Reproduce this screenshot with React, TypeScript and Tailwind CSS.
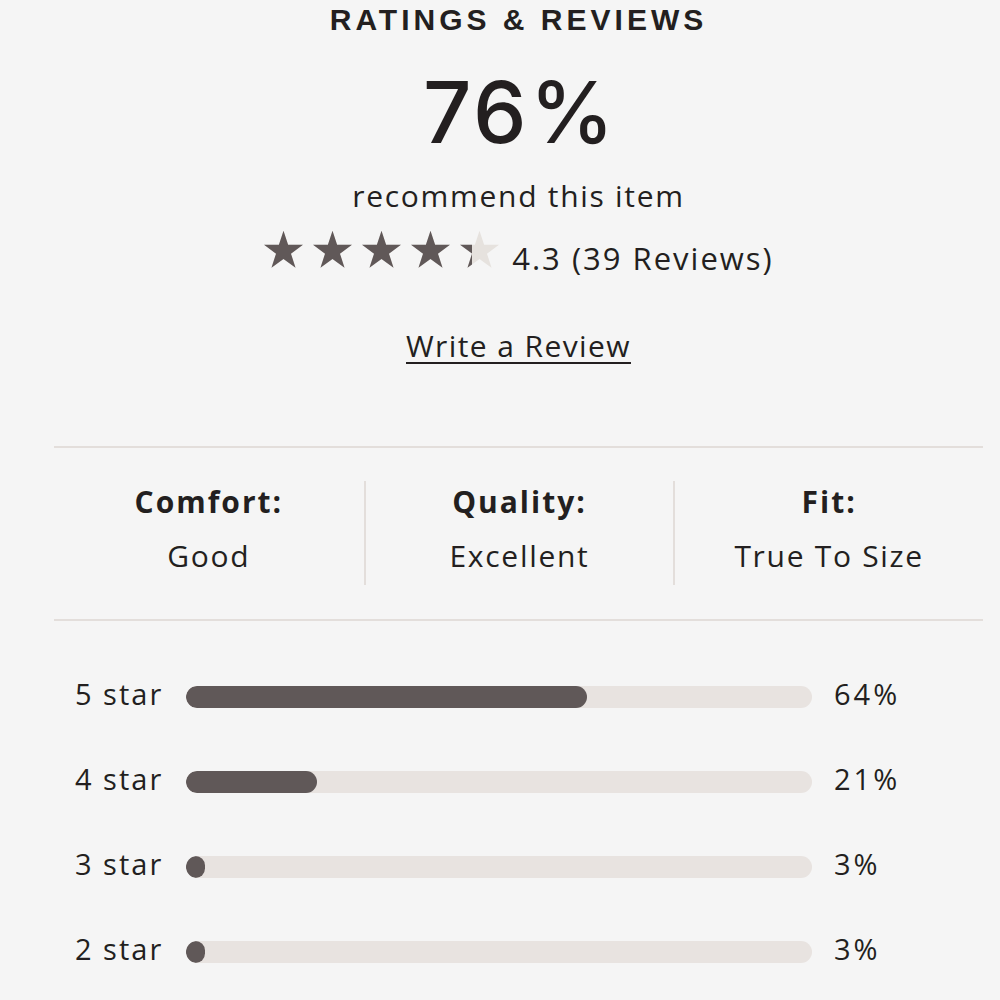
const STAR_POINTS =
  "12,1 14.7,9.29 23.41,9.29 16.37,14.42 19.05,22.71 12,17.59 4.95,22.71 7.63,14.42 0.59,9.29 9.3,9.29";

function Star({ fill }: { fill: number }) {
  return (
    <div className="relative w-[41px] h-[41px]">
      <svg viewBox="0 0 24 24" className="absolute inset-0 w-full h-full">
        <polygon points={STAR_POINTS} fill="#e6e2de" />
      </svg>
      <div className="absolute inset-y-0 left-0 overflow-hidden" style={{ width: `${fill * 100}%` }}>
        <svg viewBox="0 0 24 24" className="w-[41px] h-[41px]">
          <polygon points={STAR_POINTS} fill="#605858" />
        </svg>
      </div>
    </div>
  );
}

const bars = [
  { label: "5 star", pct: 64 },
  { label: "4 star", pct: 21 },
  { label: "3 star", pct: 3 },
  { label: "2 star", pct: 3 },
];

const attrs = [
  { name: "Comfort:", value: "Good" },
  { name: "Quality:", value: "Excellent" },
  { name: "Fit:", value: "True To Size" },
];

export default function App() {
  const rating = 4.3;
  return (
    <main className="min-h-screen bg-[#f5f5f5] text-[#231f20] font-['Open_Sans',sans-serif] overflow-hidden">
      <div className="ml-[54px] w-[929px] flex flex-col items-center">
        <h2 className="mt-[2px] font-['Liberation_Sans',sans-serif] text-[30px] leading-[36px] font-bold tracking-[4px]">
          RATINGS &amp; REVIEWS
        </h2>
        <div className="mt-[31px] font-['Inter',sans-serif] text-[85px] leading-[87px] font-medium tracking-[3px] pl-[3px]">
          76%
        </div>
        <p className="mt-[22px] text-[30px] leading-[36px] tracking-[1.7px]">recommend this item</p>
        <div className="mt-[15px] flex items-end">
          <div className="flex gap-[8px]">
            {[0, 1, 2, 3, 4].map((i) => (
              <Star key={i} fill={Math.max(0, Math.min(1, rating - i))} />
            ))}
          </div>
          <span className="ml-[12px] -mb-[6px] text-[31px] leading-[36px] tracking-[2px]">4.3 (39 Reviews)</span>
        </div>
        <a
          href="#"
          className="mt-[58px] text-[30px] leading-[36px] tracking-[1.4px] underline underline-offset-[5px] decoration-[2px]"
        >
          Write a Review
        </a>

        <div className="mt-[82px] w-full border-y-2 border-[#e3dedb] pt-[33px] pb-[34px] grid grid-cols-3">
          {attrs.map((a, i) => (
            <div
              key={a.name}
              className={`h-[104px] flex flex-col items-center ${i > 0 ? "border-l-2 border-[#e3dedb]" : ""}`}
            >
              <span className="text-[30px] leading-[42px] font-bold tracking-[2px]">{a.name}</span>
              <span className="mt-[12px] text-[30px] leading-[42px] tracking-[1.7px]">{a.value}</span>
            </div>
          ))}
        </div>

        <div className="w-full mt-[58px] flex flex-col gap-[49px] pl-[21px]">
          {bars.map((b) => (
            <div key={b.label} className="h-[36px] flex items-center">
              <span className="w-[111px] mb-[6px] text-[29px] leading-[30px] tracking-[2px]">{b.label}</span>
              <div className="w-[626px] h-[22px] rounded-full bg-[#e8e3e0] overflow-hidden">
                <div className="h-full rounded-full bg-[#605858]" style={{ width: `${Math.max(b.pct, 3)}%` }} />
              </div>
              <span className="ml-[22px] mb-[6px] text-[29px] leading-[30px] tracking-[3px]">{b.pct}%</span>
            </div>
          ))}
        </div>
      </div>
    </main>
  );
}
